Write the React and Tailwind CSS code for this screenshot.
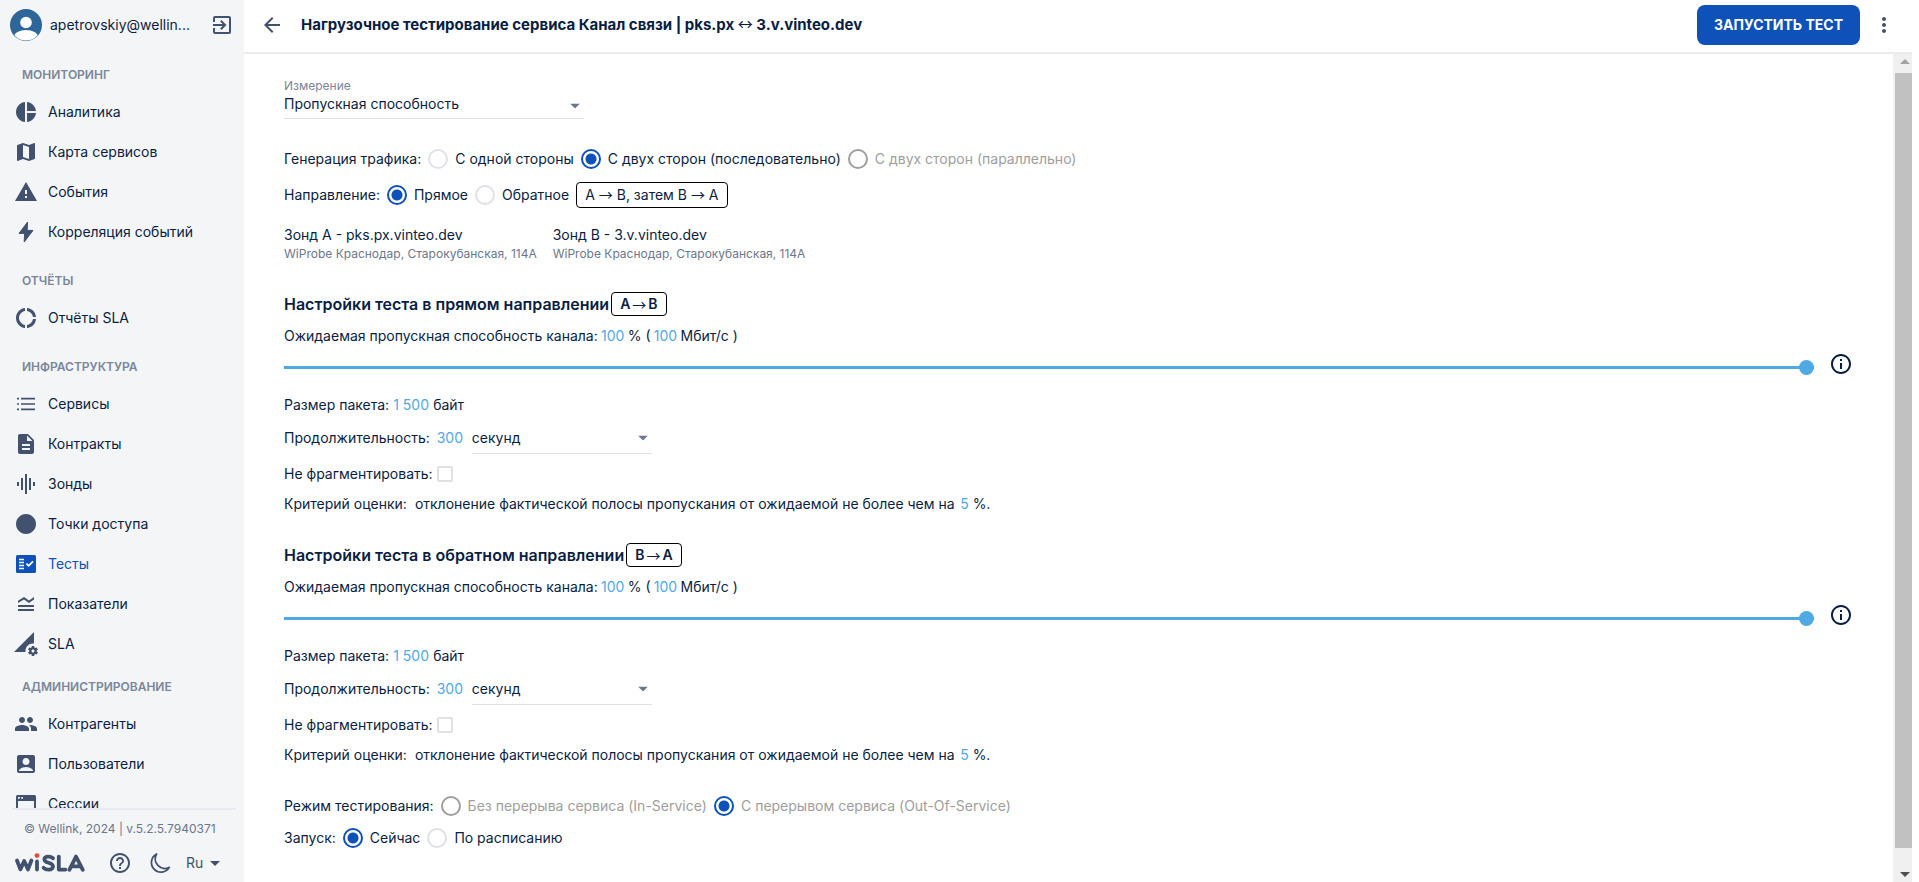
import React from "react";
import {
  MdPieChart, MdMap, MdWarning, MdDescription, MdGraphicEq, MdCircle,
  MdLegendToggle, MdPermDataSetting, MdPeople, MdAccountBox, MdExitToApp, MdArrowBack,
  MdMoreVert, MdHelpOutline, MdOutlineInfo, MdArrowDropDown, MdDonutLarge,
} from "react-icons/md";

function BoltIcon({ className }) {
  return (
    <svg viewBox="0 0 24 24" className={className} fill="currentColor" aria-hidden="true">
      <path d="M13.6 2L5 13.4H10.6L10.2 22L19 10.4H13.2Z" stroke="currentColor" strokeLinejoin="round" />
    </svg>
  );
}

function ListIcon({ className }) {
  return (
    <svg viewBox="0 0 24 24" className={className} stroke="currentColor" strokeWidth="1.6" aria-hidden="true">
      <path d="M3 6.6H5M3 12H5M3 17.4H5M7 6.6H21M7 12H21M7 17.4H21" />
    </svg>
  );
}

function TestsIcon({ className }) {
  return (
    <svg viewBox="0 0 24 24" className={className} fill="none" stroke="#fff" aria-hidden="true">
      <rect x="2" y="3" width="20" height="18" rx="1.5" fill="currentColor" stroke="none" />
      <path d="M5 7.5H10M5 10.5H10M5 13.5H10M5 16.5H10" strokeWidth="1.4" />
      <path d="M12.4 11.6L14.6 13.8L19 9.4" strokeWidth="1.8" />
    </svg>
  );
}

function WindowIcon({ className }) {
  return (
    <svg viewBox="0 0 24 24" className={className} fill="currentColor" aria-hidden="true">
      <path fillRule="evenodd" d="M3.5 3H20.5A1.5 1.5 0 0 1 22 4.500V20.500A1.500 1.500 0 0 1 20.500 22H3.500A1.500 1.500 0 0 1 2 20.500V4.500A1.500 1.500 0 0 1 3.500 3ZM4 9V20H20V9ZM4 5V6.800H5.800V5ZM7.200 5V6.800H9V5Z" />
    </svg>
  );
}

const sections = [
  {
    title: "МОНИТОРИНГ",
    items: [
      ["Аналитика", MdPieChart],
      ["Карта сервисов", MdMap],
      ["События", MdWarning],
      ["Корреляция событий", BoltIcon],
    ],
  },
  { title: "ОТЧЁТЫ", items: [["Отчёты SLA", MdDonutLarge]] },
  {
    title: "ИНФРАСТРУКТУРА",
    items: [
      ["Сервисы", ListIcon],
      ["Контракты", MdDescription],
      ["Зонды", MdGraphicEq],
      ["Точки доступа", MdCircle],
      ["Тесты", TestsIcon, true],
      ["Показатели", MdLegendToggle],
      ["SLA", MdPermDataSetting],
    ],
  },
  {
    title: "АДМИНИСТРИРОВАНИЕ",
    items: [
      ["Контрагенты", MdPeople],
      ["Пользователи", MdAccountBox],
      ["Сессии", WindowIcon],
    ],
  },
];

function Avatar() {
  return (
    <svg viewBox="0 0 32 32" className="size-8 shrink-0" aria-hidden="true">
      <defs>
        <clipPath id="avatar-clip">
          <circle cx="16" cy="16" r="15.5" />
        </clipPath>
      </defs>
      <circle cx="16" cy="16" r="16" fill="#2f6699" />
      <g clipPath="url(#avatar-clip)" fill="#fff">
        <circle cx="16" cy="13.5" r="5.8" />
        <ellipse cx="16" cy="28" rx="12" ry="7" />
      </g>
    </svg>
  );
}

function Sidebar() {
  return (
    <aside className="flex w-[244px] shrink-0 flex-col bg-[#f4f5f7] text-[#42526e]">
      <div className="flex h-[50px] shrink-0 items-center gap-2 px-[10px]">
        <Avatar />
        <span className="flex-1 whitespace-nowrap text-[#091e42]">apetrovskiy@wellin...</span>
        <button type="button" aria-label="Выйти">
          <MdExitToApp className="size-6" />
        </button>
      </div>
      <nav className="min-h-0 flex-1 overflow-hidden">
        {sections.map((s) => (
          <section key={s.title} className="pt-4 pb-1 last:pt-[10px]">
            <h2 className="flex h-[18px] items-center px-[22px] text-xs font-semibold text-[#7a869a]">{s.title}</h2>
            <ul className="pt-2">
              {s.items.map(([label, Icon, active]) => (
                <li key={label}>
                  <a href="#" className={active ? "flex h-10 items-center gap-[10px] px-[14px] text-[#0d51b9]" : "flex h-10 items-center gap-[10px] px-[14px]"}>
                    <Icon className="size-6 shrink-0" />
                    <span className={active ? "" : "text-[#091e42]"}>{label}</span>
                  </a>
                </li>
              ))}
            </ul>
          </section>
        ))}
      </nav>
      <footer className="mr-2 ml-3 border-t-2 border-[#e9eaef]">
        <p className="flex h-[38px] items-center pl-3 text-xs text-[#6b778c]">© Wellink, 2024 | v.5.2.5.7940371</p>
        <div className="flex h-[34px] items-start pt-[3px]">
          <Logo />
          <button type="button" aria-label="Справка" className="ml-[22px]">
            <MdHelpOutline className="size-6" />
          </button>
          <button type="button" aria-label="Тёмная тема" className="ml-4">
            <svg viewBox="0 0 24 24" className="size-6" fill="none" stroke="currentColor" strokeWidth="1.8" strokeLinejoin="round">
              <path d="M8.6 3A9.6 9.6 0 0 0 21.3 16.4A9.6 9.6 0 1 1 8.6 3Z" />
            </svg>
          </button>
          <button type="button" className="ml-[14px] flex h-6 items-center">
            Ru <MdArrowDropDown className="size-6" />
          </button>
        </div>
      </footer>
    </aside>
  );
}

function Logo() {
  return (
    <svg viewBox="0 0 71 20" className="mt-[2px] ml-[3px] h-5 w-[71px]" fill="none" stroke="#42526e" strokeWidth="3.8" strokeLinecap="round" strokeLinejoin="round" aria-label="wiSLA">
      <path d="M2 7.5L5.4 16.4L9.2 8L13 16.4L16.4 7.5M22 8.5V16.6" />
      <path d="M38 5.2C35 2.6 29.4 3.3 29.4 6.4C29.4 10.4 38 9 38 13.2C38 17.2 31.6 17.6 28.6 14.8M43.8 3.6V16.6H50.4M54.4 16.8L61 3.6L67.8 16.8M57.4 13.4H64.6" />
      <circle cx="22" cy="2.6" r="2.4" fill="#e5483d" stroke="none" />
    </svg>
  );
}

function Arrow({ children }) {
  return <span className="font-['Noto_Sans_CJK_SC',sans-serif] leading-none font-normal">{children}</span>;
}

function Radio({ name, label, checked, disabled }) {
  return (
    <label className={disabled ? "flex items-center gap-[7px] text-[#9e9e9e]" : "flex items-center gap-[7px]"}>
      <input
        type="radio"
        name={name}
        defaultChecked={checked}
        disabled={disabled}
        className={
          disabled
            ? "size-5 appearance-none rounded-full border-2 border-[#9e9e9e] checked:border-[#0d51b9] checked:bg-[radial-gradient(circle,#0d51b9_5px,transparent_6px)]"
            : "size-5 appearance-none rounded-full border-2 border-[#dfe1e6] checked:border-[#0d51b9] checked:bg-[radial-gradient(circle,#0d51b9_5px,transparent_6px)]"
        }
      />
      {label}
    </label>
  );
}

function Value({ id, value, label, className }) {
  return (
    <input
      id={id}
      type="text"
      aria-label={label}
      defaultValue={value}
      className={"bg-transparent p-0 text-center text-[#4faae4] outline-none " + className}
    />
  );
}

function Select({ id, label, value, className }) {
  return (
    <div className={"relative border-b border-[#dfe1e6] " + className}>
      <select id={id} aria-label={label} className="h-full w-full appearance-none bg-transparent outline-none">
        <option>{value}</option>
      </select>
      <svg viewBox="0 0 10 5" className="pointer-events-none absolute top-1/2 right-1 h-[5px] w-[10px] -translate-y-1/2 text-[#6b778c]" aria-hidden="true">
        <path d="M0 0H10L5 5Z" fill="currentColor" />
      </svg>
    </div>
  );
}

function Direction({ id, title, from, to }) {
  return (
    <section className="pb-[27px]">
      <h2 className="flex h-6 items-center gap-[2px] text-base font-semibold">
        {title}
        <span className="flex h-6 items-center gap-[2px] rounded border border-black px-2 text-sm">
          {from} <Arrow>→</Arrow> {to}
        </span>
      </h2>
      <div className="mt-2 flex h-6 items-center">
        <span>Ожидаемая пропускная способность канала:</span>
        <Value label="Процент" value="100" className="ml-[2px] w-[26px]" />
        <span className="ml-[2px]">% (</span>
        <Value label="Мбит/с" value="100" className="ml-[2px] w-[26px]" />
        <span className="ml-[2px]">Мбит/с )</span>
      </div>
      <div className="mt-1 flex h-6 items-center gap-[15px]">
        <input
          type="range"
          aria-label="Ожидаемая пропускная способность канала"
          defaultValue={100}
          className="mt-[6px] h-4 min-w-0 flex-1 appearance-none bg-[linear-gradient(#4faae4,#4faae4)] bg-[length:100%_3px] bg-center bg-no-repeat [&::-webkit-slider-thumb]:size-[15px] [&::-webkit-slider-thumb]:appearance-none [&::-webkit-slider-thumb]:rounded-full [&::-webkit-slider-thumb]:bg-[#4faae4]"
        />
        <button type="button" aria-label="Информация">
          <MdOutlineInfo className="size-6" />
        </button>
      </div>
      <div className="mt-[17px] flex h-6 items-center">
        <label htmlFor={id + "-size"}>Размер пакета:</label>
        <Value id={id + "-size"} value="1 500" className="ml-[2px] w-10" />
        <span className="ml-[2px]">байт</span>
      </div>
      <div className="mt-[5px] flex h-8 items-center">
        <label htmlFor={id + "-time"}>Продолжительность:</label>
        <Value id={id + "-time"} value="300" className="ml-[6px] w-7" />
        <Select label="Единица времени" value="секунд" className="ml-2 h-8 w-[180px]" />
      </div>
      <div className="mt-2 flex h-6 items-center gap-1">
        <label htmlFor={id + "-df"}>Не фрагментировать:</label>
        <input id={id + "-df"} type="checkbox" className="size-4 appearance-none rounded-xs border-2 border-[#dfe1e6] checked:bg-[#0d51b9]" />
      </div>
      <div className="mt-[6px] flex h-6 items-center">
        <span>Критерий оценки:</span>
        <span className="ml-2">отклонение фактической полосы пропускания от ожидаемой не более чем на</span>
        <Value label="Отклонение" value="5" className="ml-1 w-3" />
        <span className="ml-[2px]">%.</span>
      </div>
    </section>
  );
}

function Scrollbar() {
  return (
    <div className="flex w-[19px] shrink-0 flex-col items-end bg-[#f0f0f0]" aria-hidden="true">
      <svg viewBox="0 0 17 19" className="h-[19px] w-[17px] shrink-0">
        <path d="M5 10L10 5L15 10Z" fill="#a3a3a3" />
      </svg>
      <div className="w-[17px] flex-1 bg-[#c1c1c1]" />
      <svg viewBox="0 0 17 34" className="h-[34px] w-[17px] shrink-0">
        <path d="M5 24H15L10 29Z" fill="#505050" />
      </svg>
    </div>
  );
}

export default function App() {
  return (
    <div className="flex h-screen overflow-hidden bg-white font-['Inter','Roboto',sans-serif] text-sm text-[#091e42]">
      <Sidebar />
      <main className="mr-[7px] flex min-w-0 flex-1 flex-col">
        <header className="flex h-[54px] shrink-0 items-center border-b-2 border-[#ebecf0] pr-4 pb-[2px] pl-4">
          <button type="button" aria-label="Назад" className="mr-[17px] text-[#42526e]">
            <MdArrowBack className="size-6" />
          </button>
          <h1 className="flex-1 truncate text-[15px] font-bold">
            Нагрузочное тестирование сервиса Канал связи | pks.px <Arrow>↔</Arrow> 3.v.vinteo.dev
          </h1>
          <button type="button" className="h-10 rounded-lg bg-[#0d51b9] px-[17px] font-bold text-white">
            ЗАПУСТИТЬ ТЕСТ
          </button>
          <button type="button" aria-label="Меню" className="ml-3 text-[#42526e]">
            <MdMoreVert className="size-6" />
          </button>
        </header>
        <div className="flex min-h-0 flex-1">
          <form className="min-w-0 flex-1 overflow-hidden px-10 pt-6">
            <label htmlFor="metric" className="block h-4 text-xs leading-4 text-[#7a869a]">Измерение</label>
            <Select id="metric" value="Пропускная способность" className="h-[25px] w-[300px] pb-1" />
            <fieldset className="mt-7 flex h-6 items-center gap-[7px]">
              <span>Генерация трафика:</span>
              <Radio name="traffic" label="С одной стороны" />
              <Radio name="traffic" label="С двух сторон (последовательно)" checked />
              <Radio name="traffic" label="С двух сторон (параллельно)" disabled />
            </fieldset>
            <fieldset className="mt-[11px] flex h-[26px] items-center gap-[7px]">
              <span>Направление:</span>
              <Radio name="dir" label="Прямое" checked />
              <Radio name="dir" label="Обратное" />
              <span className="rounded border border-black px-2 leading-6">
                A <Arrow>→</Arrow> B, затем B <Arrow>→</Arrow> A
              </span>
            </fieldset>
            <div className="mt-[17px] mb-[29px] flex gap-4">
              <div>
                <p className="leading-5">Зонд A - pks.px.vinteo.dev</p>
                <p className="text-xs leading-[18px] text-[#6b778c]">WiProbe Краснодар, Старокубанская, 114А</p>
              </div>
              <div>
                <p className="leading-5">Зонд B - 3.v.vinteo.dev</p>
                <p className="text-xs leading-[18px] text-[#6b778c]">WiProbe Краснодар, Старокубанская, 114А</p>
              </div>
            </div>
            <Direction id="fwd" title="Настройки теста в прямом направлении" from="A" to="B" />
            <Direction id="rev" title="Настройки теста в обратном направлении" from="B" to="A" />
            <fieldset className="flex h-6 items-center gap-[7px]">
              <span>Режим тестирования:</span>
              <Radio name="mode" label="Без перерыва сервиса (In-Service)" disabled />
              <Radio name="mode" label="С перерывом сервиса (Out-Of-Service)" checked disabled />
            </fieldset>
            <fieldset className="mt-2 flex h-6 items-center gap-[7px]">
              <span>Запуск:</span>
              <Radio name="start" label="Сейчас" checked />
              <Radio name="start" label="По расписанию" />
            </fieldset>
          </form>
          <Scrollbar />
        </div>
      </main>
    </div>
  );
}
